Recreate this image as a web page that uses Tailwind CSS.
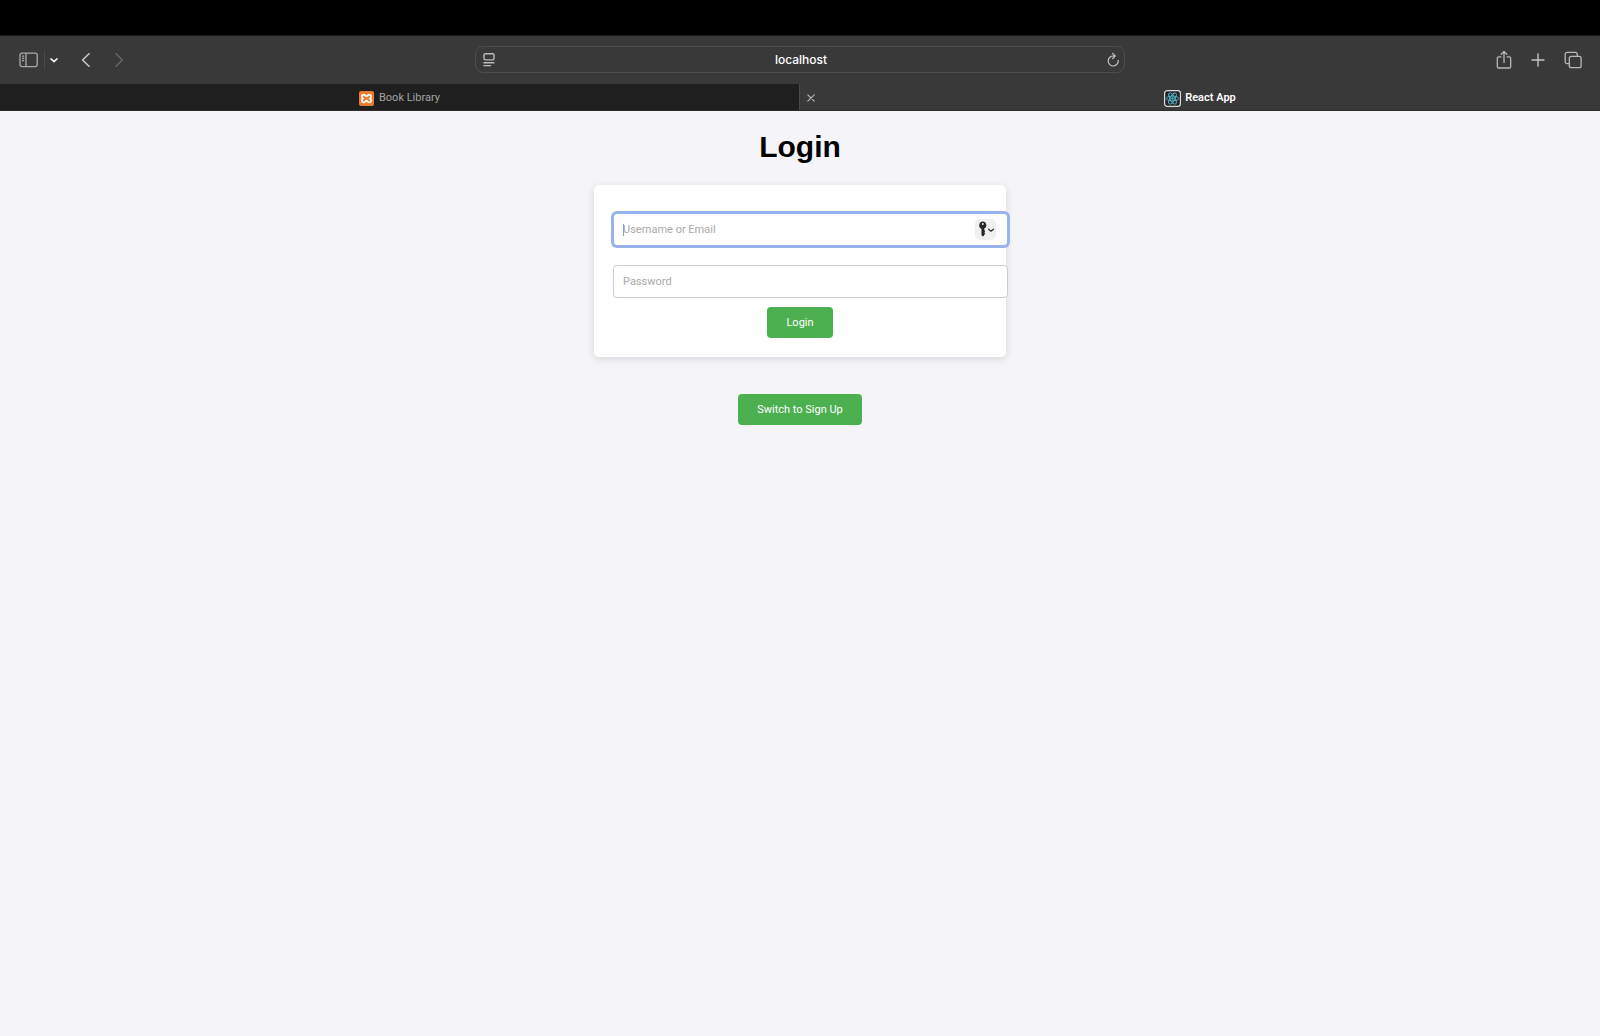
<!DOCTYPE html>
<html lang="en">
<head>
<meta charset="utf-8">
<meta name="viewport" content="width=device-width, initial-scale=1">
<title>React App</title>
<script src="https://cdn.jsdelivr.net/npm/@tailwindcss/browser@4"></script>
</head>
<body class="flex min-h-screen flex-col bg-[#f4f4f9] font-['Roboto',sans-serif] text-[11px] leading-4">
<header class="border-b border-[#2c2c2c] bg-[#393939] pt-[35px] shadow-[inset_0_35px_0_#000]">
  <!-- Toolbar -->
  <div class="flex h-[49px] items-center border-t border-[#1c1c1c] px-[18px] pb-px text-[#c4c4c4]">
    <div class="flex flex-1 items-center">
      <button aria-label="Sidebar"><svg class="block" width="21" height="16" viewBox="0 0 21 16" fill="none" stroke="#aaa" stroke-width="1.3"><rect x="2" y="1.2" width="17.2" height="13.4" rx="2"/><path d="M8 1.2v13.4M4 4.2h2.2M4 6.4h2.2M4 8.6h2.2"/></svg></button>
      <span class="ml-[5px] h-[18px] w-px bg-[#4b4b4b]"></span>
      <button aria-label="Tab groups" class="ml-1"><svg class="block" width="10" height="8" viewBox="0 0 10 8" fill="none" stroke="#eee" stroke-width="1.6" stroke-linecap="round" stroke-linejoin="round"><path d="M2 2.8l3 2.8 3-2.8"/></svg></button>
      <button aria-label="Back" class="ml-[21px]"><svg class="block" width="12" height="16" viewBox="0 0 12 16" fill="none" stroke="#c8c8c8" stroke-width="1.6" stroke-linecap="round" stroke-linejoin="round"><path d="M9 1.8L2.6 8 9 14.2"/></svg></button>
      <button aria-label="Forward" class="ml-[21px]"><svg class="block" width="12" height="16" viewBox="0 0 12 16" fill="none" stroke="#646464" stroke-width="1.6" stroke-linecap="round" stroke-linejoin="round"><path d="M3 1.8L9.4 8 3 14.2"/></svg></button>
    </div>
    <div class="flex h-[27px] w-[650px] items-center rounded-lg border border-[#4d4d4d] pr-[3px] pl-[5px]">
      <button aria-label="Page menu"><svg class="block" width="16" height="16" viewBox="0 0 16 16" fill="none" stroke="#bbb" stroke-width="1.4"><rect x="3" y="1.7" width="10" height="6.2" rx="1.4"/><path d="M2.4 10.7h11M2.4 13.6h7.6"/></svg></button>
      <input aria-label="Address" value="localhost" class="min-w-0 flex-1 bg-transparent text-center font-['Inter',sans-serif] text-[12px] font-medium text-white outline-none">
      <button aria-label="Reload"><svg class="block" width="16" height="16" viewBox="0 0 16 16" fill="none" stroke="#c4c4c4" stroke-width="1.2" stroke-linecap="round" stroke-linejoin="round"><path d="M13.2 8.4A5 5 0 1 1 8.6 4H10M7.6 1.4L10.2 4 7.6 6.6"/></svg></button>
    </div>
    <div class="flex flex-1 items-center justify-end gap-[19px]">
      <button aria-label="Share"><svg class="block" width="16" height="20" viewBox="0 0 16 20" fill="none" stroke="#b8b8b8" stroke-width="1.3" stroke-linecap="round" stroke-linejoin="round"><path d="M5 6.8H2.9a1.6 1.6 0 0 0-1.6 1.6v8a1.6 1.6 0 0 0 1.6 1.6h10.2a1.6 1.6 0 0 0 1.6-1.6v-8a1.6 1.6 0 0 0-1.6-1.6H11M8 12.5V1.8M5.2 4.2L8 1.5l2.8 2.7"/></svg></button>
      <button aria-label="New tab"><svg class="block" width="14" height="14" viewBox="0 0 14 14" fill="none" stroke="#c4c4c4" stroke-width="1.4" stroke-linecap="round"><path d="M7 1v12M1 7h12"/></svg></button>
      <button aria-label="Tab overview"><svg class="block" width="18" height="18" viewBox="0 0 18 18" fill="none" stroke="#b8b8b8" stroke-width="1.3"><rect x="5.3" y="5.3" width="11.8" height="11.4" rx="2"/><path d="M5.3 12.7H3.2a2 2 0 0 1-2-2V3.3a2 2 0 0 1 2-2h8a2 2 0 0 1 2 2v2"/></svg></button>
    </div>
  </div>
  <!-- Tabs -->
  <nav class="grid h-[26px] grid-cols-2">
    <a href="#" class="flex items-center justify-center gap-[5px] border-r border-[#4a4a4a] bg-[#1f1f1f] pt-0.5 text-[#a3a3a3]">
      <svg width="15" height="15" viewBox="0 0 15 15"><rect width="15" height="15" rx="2" fill="#ef7a30"/><path d="M4.8 3.6c1.6 0 1.4 1.7 2.7 1.7s1.1-1.7 2.7-1.7c2.4 0 2.4 2.9.9 3.9 1.5 1 1.5 3.9-.9 3.9-1.6 0-1.4-1.7-2.7-1.7s-1.1 1.7-2.7 1.7c-2.4 0-2.4-2.9-.9-3.9-1.5-1-1.5-3.9.9-3.9z" fill="none" stroke="#fff" stroke-width="1.7"/></svg>
      <span>Book Library</span>
    </a>
    <div class="relative flex items-center justify-center pt-0.5">
      <button aria-label="Close tab" class="absolute left-1.5"><svg class="block" width="10" height="10" viewBox="0 0 10 10" stroke="#bbb" stroke-width="1.1" stroke-linecap="round"><path d="M1.8 1.8l6.4 6.4M8.2 1.8L1.8 8.2"/></svg></button>
      <a href="#" class="flex items-center gap-1 font-semibold text-white">
        <svg width="17" height="17" viewBox="0 0 17 17" fill="none"><rect x=".6" y=".6" width="15.8" height="15.8" rx="2.6" fill="#232323" stroke="#ddd" stroke-width="1.2"/><g stroke="#55b9d0" stroke-width=".9"><ellipse cx="8.5" cy="8.5" rx="6.2" ry="2.4"/><ellipse cx="8.5" cy="8.5" rx="6.2" ry="2.4" transform="rotate(60 8.5 8.5)"/><ellipse cx="8.5" cy="8.5" rx="6.2" ry="2.4" transform="rotate(120 8.5 8.5)"/></g><circle cx="8.5" cy="8.5" r="1.2" fill="#55b9d0"/></svg>
        <span>React App</span>
      </a>
    </div>
  </nav>
</header>

<main class="flex flex-col items-center px-4 pt-[18px]">
  <h1 class="font-['Liberation_Sans',Arial,sans-serif] text-[30px] leading-9 font-bold text-black">Login</h1>
  <form class="mt-5 flex w-full max-w-[412px] flex-col items-center rounded-[5px] bg-white px-[19px] pt-7 pb-[19px] shadow-[0_2px_9px_rgba(0,0,0,0.12)]">
    <div class="relative mb-[19px] flex w-full">
      <input type="text" aria-label="Username or Email" placeholder="Username or Email" class="h-[33px] w-[calc(100%+21px)] shrink-0 rounded-[4px] border border-[#97b2ec] bg-white px-[9px] ring-2 ring-[#97b2ec] outline-none placeholder:text-[#a9a9a9]">
      <span class="absolute top-[11px] left-[10px] h-3 w-px bg-[#7fa0ea]"></span>
      <button type="button" aria-label="Passwords" class="absolute top-1.5 -right-[9px] rounded-[5px] bg-[#f0f0f0]"><svg class="block" width="21" height="21" viewBox="0 0 21 21"><path fill-rule="evenodd" d="M7.8 2.6a3.7 3.7 0 0 1 1.5 7v1.6l1 1-1 1.1 1 1.1-1 1v.8L7.9 17.6l-1.4-1.3V9.7a3.7 3.7 0 0 1 1.3-7.1zm0 1.4a1 1 0 1 0 0 2 1 1 0 0 0 0-2z" fill="#252525"/><path d="M13.6 10.2l2.4 2 2.4-2" fill="none" stroke="#333" stroke-width="1.3" stroke-linecap="round" stroke-linejoin="round"/></svg></button>
    </div>
    <div class="mb-[9px] flex w-full">
      <input type="password" aria-label="Password" placeholder="Password" class="h-[33px] w-[calc(100%+21px)] shrink-0 rounded-[4px] border border-[#ccc] bg-white px-[9px] outline-none placeholder:text-[#a9a9a9]">
    </div>
    <button type="button" class="h-[31px] rounded-[4px] bg-[#4caf50] px-[19px] text-white">Login</button>
  </form>
  <button type="button" class="mt-[37px] h-[31px] rounded-[4px] bg-[#4caf50] px-[19px] text-white">Switch to Sign Up</button>
</main>
</body>
</html>
